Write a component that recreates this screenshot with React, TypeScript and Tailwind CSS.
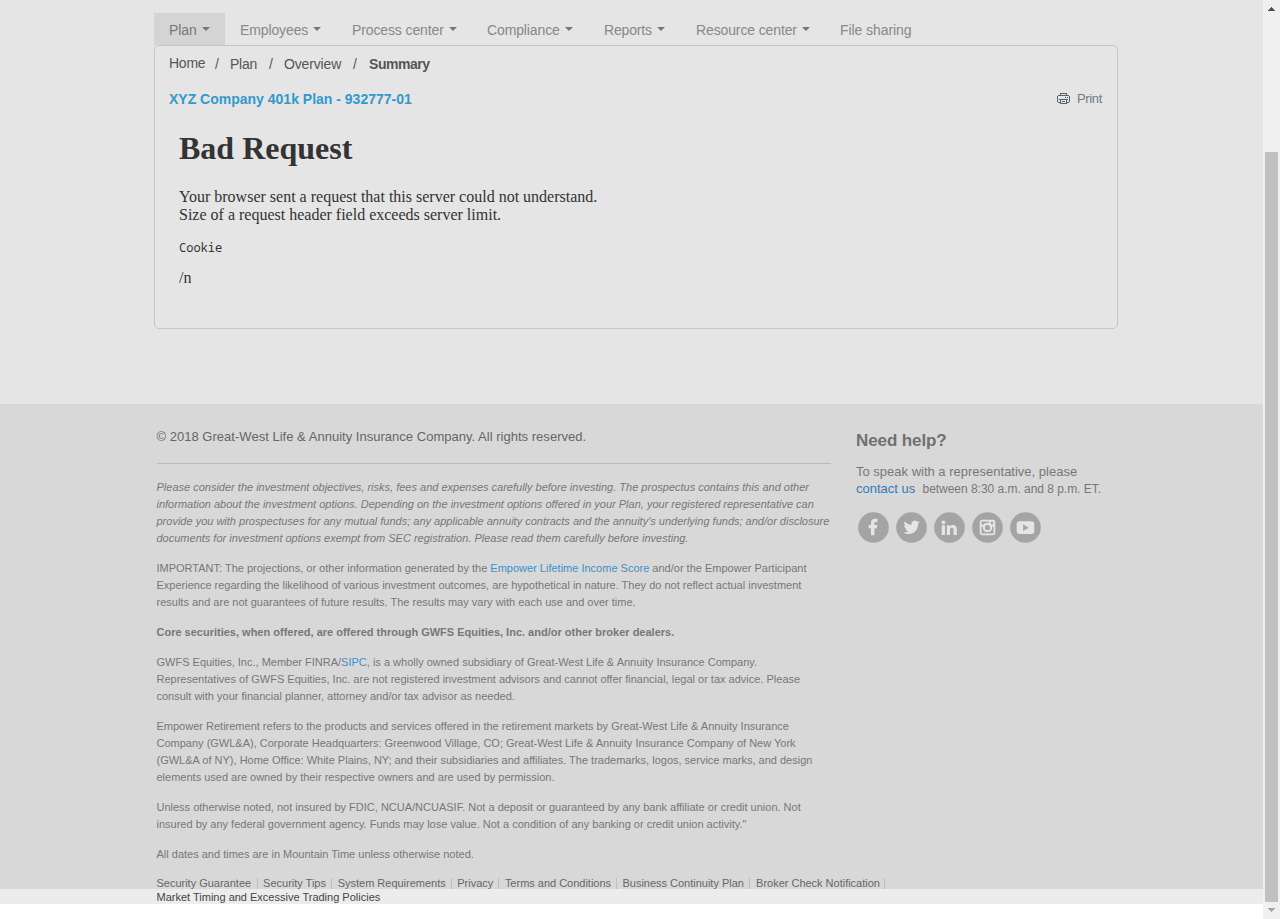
import React from "react";

const navItems = [
  { label: "Plan", width: "w-[71px]", menu: true, active: true },
  { label: "Employees", width: "w-[112px]", menu: true, track: "tracking-[-0.12px]" },
  { label: "Process center", width: "w-[135px]", menu: true, track: "tracking-[-0.12px]" },
  { label: "Compliance", width: "w-[117px]", menu: true, track: "tracking-[-0.12px]" },
  { label: "Reports", width: "w-[92px]", menu: true, track: "tracking-[-0.16px]" },
  { label: "Resource center", width: "w-[144px]", menu: true, track: "tracking-[-0.12px]" },
  { label: "File sharing", width: "w-[102px]", menu: false, track: "tracking-[-0.08px]" },
];

const legalLinks = [
  { label: "Security Guarantee", width: "w-[101px]" },
  { label: "Security Tips", width: "w-[69px]" },
  { label: "System Requirements", width: "w-[114px]" },
  { label: "Privacy", width: "w-[42px]" },
  { label: "Terms and Conditions", width: "w-[112px]" },
  { label: "Business Continuity Plan", width: "w-[128px]" },
  { label: "Broker Check Notification", width: "w-[129px]" },
];

function PrinterIcon() {
  return (
    <svg width="13" height="11" viewBox="0 0 13 11" fill="#44687f" shapeRendering="crispEdges">
      <path d="M3 0h7v1H3zM3 1h1v1H3zM9 1h1v1H9zM1 2h11v1H1zM0 3h1v6H0zM12 3h1v6h-1zM1 9h2v1H1zM10 9h2v1h-2zM2 6h9v1H2zM3 7h1v3H3zM9 7h1v3H9zM3 10h7v1H3zM5 8h3v1H5zM8 4h1v1H8zM10 4h1v1h-1z" />
    </svg>
  );
}

function Social({ children }: { children: React.ReactNode }) {
  return (
    <svg width="31" height="31" viewBox="0 0 31 31">
      <circle cx="15.5" cy="15.5" r="15.3" fill="#a4a4a4" />
      {children}
    </svg>
  );
}

function Lines({ lines, className = "" }: { lines: React.ReactNode[]; className?: string }) {
  return (
    <p className={"mb-[13px] text-[11px] leading-[17px] text-[#777] " + className}>
      {lines.map((line, i) => (
        <span key={i} className="block whitespace-nowrap">{line}</span>
      ))}
    </p>
  );
}

function Scrollbar() {
  return (
    <div className="flex w-[17px] shrink-0 flex-col items-center bg-[#f0f0f0]">
      <div className="flex h-[152px] pt-[7px]">
        <svg width="7" height="4" viewBox="0 0 7 4" shapeRendering="crispEdges"><path d="M3 0h1v1h1v1h1v1h1v1H0V3h1V2h1V1h1z" fill="#505050" /></svg>
      </div>
      <div className="h-[750px] w-[13px] bg-[#c0c0c0]" />
      <svg className="mt-[6px]" width="7" height="4" viewBox="0 0 7 4" shapeRendering="crispEdges"><path d="M0 0h7v1H6v1H5v1H4v1H3V3H2V2H1V1H0z" fill="#a3a3a3" /></svg>
    </div>
  );
}

export default function App() {
  return (
    <div className="flex h-[919px] w-[1280px] overflow-hidden bg-white font-['Liberation_Sans',Arial,sans-serif]">
      <div className="w-[1263px] shrink-0">
        <main className="h-[404px] bg-[#e5e5e5] pl-[154px] pt-[13px]">
          <nav className="flex h-8 text-[14px] leading-5 text-[#888]">
            {navItems.map((n) => (
              <a key={n.label} className={`flex h-8 shrink-0 whitespace-nowrap pl-[15px] pt-[7px] ${n.width} ${n.track ?? "tracking-[-0.1px]"} ${n.active ? "bg-[#d4d4d4] text-[#777]" : ""}`}>
                {n.label}
                {n.menu && <span className="ml-[5px] mt-[7px] h-0 w-0 border-x-4 border-t-4 border-x-transparent border-t-[#777]" />}
              </a>
            ))}
          </nav>
          <section className="h-[284px] w-[964px] rounded-[5px] border border-[#c5c5c1]">
            <div className="flex h-[35px] whitespace-nowrap pl-[14px] text-[14px] leading-5 text-[#555]">
              <span className="w-[46px] pt-[7px] tracking-[-0.25px]">Home</span>
              <span className="w-[15px] pt-2">/</span>
              <span className="w-[39px] pt-2 tracking-[-0.25px]">Plan</span>
              <span className="w-[15px] pt-2">/</span>
              <span className="w-[69px] pt-2 tracking-[-0.15px]">Overview</span>
              <span className="w-[16px] pt-2">/</span>
              <strong className="pt-2 tracking-[-0.45px]">Summary</strong>
            </div>
            <div className="flex h-[50px] justify-between pl-[14px] pr-[15px] pt-2 leading-5">
              <h2 className="text-[14px] font-bold text-[#3399cc]">XYZ Company 401k Plan - 932777-01</h2>
              <a className="flex gap-[7px] text-[13px] tracking-[-0.35px] text-[#6c7c88]"><span className="pt-[4px]"><PrinterIcon /></span>Print</a>
            </div>
            <div className="pl-6 font-['Liberation_Serif','Times_New_Roman',serif] text-[#333]">
              <h1 className="text-[32px] font-bold leading-[35px]">Bad Request</h1>
              <p className="mt-[22px] text-[16px] leading-[18px]">Your browser sent a request that this server could not understand.<br />Size of a request header field exceeds server limit.</p>
              <pre className="mt-[16px] font-['Noto_Sans_Mono','DejaVu_Sans_Mono',monospace] text-[12px] leading-[16px]">Cookie</pre>
              <p className="mt-[13px] text-[16px] leading-[18px]">/n</p>
            </div>
          </section>
        </main>
        <footer>
          <div className="flex h-[485px] bg-[#d8d8d8] pl-[156.5px]">
            <div className="w-[699.5px] shrink-0">
              <div className="h-[60px] w-[674.5px] border-b border-[#b9bab9] pt-[23px] text-[13px] leading-5 tracking-[0.02px] text-[#666]">© 2018 Great-West Life &amp; Annuity Insurance Company. All rights reserved.</div>
              <div className="pt-[15px]">
                <Lines className="italic" lines={[
                  "Please consider the investment objectives, risks, fees and expenses carefully before investing. The prospectus contains this and other",
                  "information about the investment options. Depending on the investment options offered in your Plan, your registered representative can",
                  "provide you with prospectuses for any mutual funds; any applicable annuity contracts and the annuity's underlying funds; and/or disclosure",
                  "documents for investment options exempt from SEC registration. Please read them carefully before investing.",
                ]} />
                <Lines lines={[
                  <>IMPORTANT: The projections, or other information generated by the <a className="text-[#438fc4]">Empower Lifetime Income Score</a> and/or the Empower Participant</>,
                  "Experience regarding the likelihood of various investment outcomes, are hypothetical in nature. They do not reflect actual investment",
                  "results and are not guarantees of future results. The results may vary with each use and over time.",
                ]} />
                <Lines className="font-bold" lines={["Core securities, when offered, are offered through GWFS Equities, Inc. and/or other broker dealers."]} />
                <Lines lines={[
                  <>GWFS Equities, Inc., Member FINRA/<a className="text-[#438fc4]">SIPC</a>, is a wholly owned subsidiary of Great-West Life &amp; Annuity Insurance Company.</>,
                  "Representatives of GWFS Equities, Inc. are not registered investment advisors and cannot offer financial, legal or tax advice. Please",
                  "consult with your financial planner, attorney and/or tax advisor as needed.",
                ]} />
                <Lines lines={[
                  "Empower Retirement refers to the products and services offered in the retirement markets by Great-West Life & Annuity Insurance",
                  "Company (GWL&A), Corporate Headquarters: Greenwood Village, CO; Great-West Life & Annuity Insurance Company of New York",
                  "(GWL&A of NY), Home Office: White Plains, NY; and their subsidiaries and affiliates. The trademarks, logos, service marks, and design",
                  "elements used are owned by their respective owners and are used by permission.",
                ]} />
                <Lines lines={[
                  "Unless otherwise noted, not insured by FDIC, NCUA/NCUASIF. Not a deposit or guaranteed by any bank affiliate or credit union. Not",
                  "insured by any federal government agency. Funds may lose value. Not a condition of any banking or credit union activity.\"",
                ]} />
                <Lines lines={["All dates and times are in Mountain Time unless otherwise noted."]} />
                <div className="flex h-[13px] text-[11px] tracking-[-0.01px] text-[#666]">
                  {legalLinks.map((l) => (
                    <a key={l.label} className={`mr-[5.6px] mt-[2px] h-[11px] shrink-0 whitespace-nowrap border-r border-[#bfbfbf] leading-[11px] ${l.width}`}>{l.label}</a>
                  ))}
                </div>
              </div>
            </div>
            <aside className="pt-[27px] text-[#777]">
              <h3 className="text-[17px] font-bold leading-5 tracking-[-0.1px] text-[#707070]">Need help?</h3>
              <p className="mt-[12px] whitespace-nowrap text-[13px] leading-[17px]">To speak with a representative, please<br /><a className="text-[#3a78ad]">contact us</a>&nbsp; <span className="text-[12px] tracking-[-0.03px]">between 8:30 a.m. and 8 p.m. ET.</span></p>
              <div className="mt-[14px] flex gap-[7px] pl-[2px]">
                <Social><path d="M13 23.2v-7h-2.4v-3.3H13v-2c0-2.9 1.7-4.2 4-4.2.9 0 1.9.1 2.4.2v3h-1.5c-1.3 0-1.5.6-1.5 1.4v1.6h2.9l-.4 3.3h-2.5v7z" fill="#e5e5e5" /></Social>
                <Social><path transform="translate(-1.1 -1) scale(1.07)" d="M23.2 10.5c-.6.2-1.1.4-1.8.5.6-.4 1.1-1 1.3-1.7-.6.3-1.2.6-1.9.7a3.1 3.1 0 0 0-5.3 2.8c-2.6-.1-4.9-1.4-6.4-3.3-.8 1.4-.4 3.2.9 4.2-.5 0-1-.2-1.4-.4 0 1.5 1 2.8 2.5 3.1-.5.1-.9.1-1.4.1.4 1.2 1.5 2.1 2.9 2.1A6.3 6.3 0 0 1 8 20c5.8 3.7 13.8.4 13.7-8 .6-.4 1.1-.9 1.5-1.5z" fill="#e5e5e5" /></Social>
                <Social><path d="M7.7 13.2H11V23H7.7zM9.4 8.4a1.9 1.9 0 1 1 0 3.8 1.9 1.9 0 0 1 0-3.8zM12.8 13.2h3v1.3c.6-1 1.6-1.6 3-1.6 3.1 0 4 2 4 4.5V23h-3.3v-5c0-1.4 0-2.3-1.7-2.3S16 16.8 16 18v5h-3.2z" fill="#e5e5e5" /></Social>
                <Social>
                  <rect x="8.6" y="8.6" width="13.8" height="13.8" rx="1.5" fill="none" stroke="#e5e5e5" strokeWidth="1.8" />
                  <path d="M8 12.5h4.5v2H8zM18.5 12.5H23v2h-4.5z" fill="#e5e5e5" />
                  <circle cx="15.5" cy="15.5" r="3.7" fill="none" stroke="#e5e5e5" strokeWidth="2.2" /><path d="M17 8.5h5.5v4H17z" fill="#e5e5e5" /><path d="M18.8 9.8h2.3V12h-2.3z" fill="#a4a4a4" />
                </Social>
                <Social><rect x="6.7" y="9.3" width="17.6" height="12.7" rx="3" fill="#e5e5e5" /><path d="M13.1 12.3v6.7l5.7-3.3z" fill="#a4a4a4" /></Social>
              </div>
            </aside>
          </div>
          <div className="h-[15px] bg-[#ececec] pl-[156.5px] text-[11px] leading-[17px] text-[#444]">Market Timing and Excessive Trading Policies</div>
        </footer>
      </div>
      <Scrollbar />
    </div>
  );
}
